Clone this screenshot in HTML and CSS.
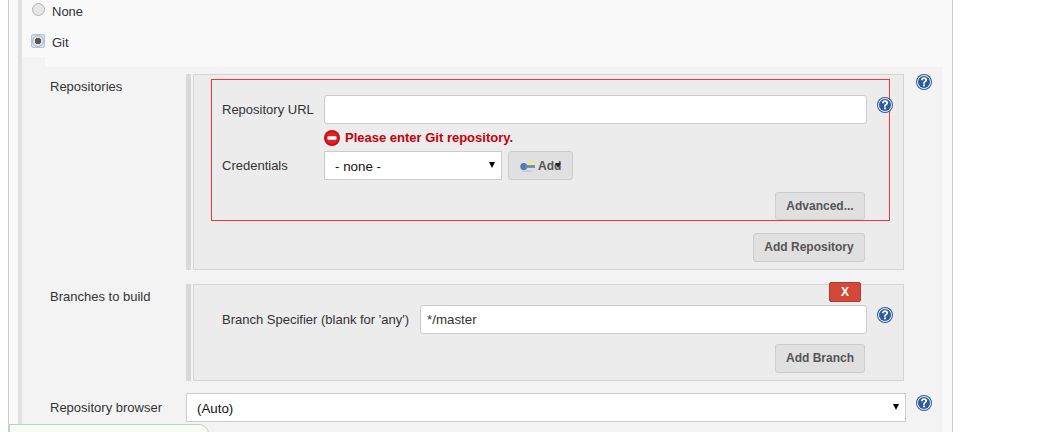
FILE: index.html
```html
<!DOCTYPE html>
<html lang="en">
<head>
<meta charset="utf-8">
<title>Source Code Management</title>
<link rel="stylesheet" href="styles.css">
</head>
<body>
<svg class="defs" width="0" height="0" aria-hidden="true">
  <symbol id="help" viewBox="0 0 16 16">
    <circle cx="8" cy="8" r="8" fill="#2f5a9e"/>
    <circle cx="8" cy="8" r="7" fill="#e8eef8"/>
    <circle cx="8" cy="8" r="6" fill="#2f5a9e"/>
    <path d="M5 6.200C5 4.300 6.300 3.200 8.100 3.200s3 1 3 2.600c0 1.300-.7 1.900-1.500 2.500-.6.400-.8.700-.8 1.400H7.100c0-1.200.3-1.800 1.100-2.400.6-.5.900-.7.900-1.300 0-.6-.4-1-1.100-1-.8 0-1.200.5-1.200 1.200Z" fill="#fff"/>
    <rect x="7.100" y="10.400" width="1.800" height="1.900" fill="#fff"/>
  </symbol>
</svg>
<div class="frame">
  <div class="scm">
    <div class="choice"><span class="radio"></span><span>None</span></div>
    <div class="choice choice-git"><span class="focus"><span class="radio radio-on"></span></span><span>Git</span></div>
    <div class="tab"></div>
    <section class="git">
      <div class="row row-repo">
        <div class="row-label">Repositories</div>
        <div class="block">
          <div class="box">
            <div class="invalid">
              <div class="field field-url">
                <label class="field-label">Repository URL</label>
                <input class="text" type="text">
                <svg class="help help-in"><use href="#help"/></svg>
              </div>
              <div class="error">
                <svg class="stop" viewBox="0 0 16 16"><circle cx="8" cy="8" r="8" fill="#c8101a"/><circle cx="8" cy="8" r="6" fill="#e01f26"/><rect x="3.500" y="6.300" width="9" height="3.400" rx=".6" fill="#fff"/></svg>
                <span class="error-text">Please enter Git repository.</span>
              </div>
              <div class="field field-cred">
                <label class="field-label">Credentials</label>
                <div class="cred-controls">
                  <div class="select select-cred">- none -</div>
                  <div class="btn btn-add">
                    <svg class="key" viewBox="0 0 16 12"><ellipse cx="7" cy="11" rx="6" ry="1" fill="#ccc"/><circle cx="11" cy="2.500" r="2.200" fill="#f5ee5a"/><circle cx="3.800" cy="6.500" r="3.500" fill="#4f7ab2"/><rect x="5" y="5.200" width="10" height="2.600" fill="#5f88bd"/></svg>
                    <span>Add</span><span class="caret"></span>
                  </div>
                </div>
              </div>
              <div class="actions actions-adv"><div class="btn">Advanced...</div></div>
            </div>
            <div class="actions actions-repo"><div class="btn">Add Repository</div></div>
          </div>
        </div>
        <svg class="help"><use href="#help"/></svg>
      </div>
      <div class="row row-branch">
        <div class="row-label">Branches to build</div>
        <div class="block">
          <div class="box box-branch">
            <div class="btn-x">X</div>
            <div class="field field-branch">
              <label class="field-label">Branch Specifier (blank for 'any')</label>
              <input class="text" type="text" value="*/master">
              <svg class="help help-in"><use href="#help"/></svg>
            </div>
            <div class="actions actions-branch"><div class="btn">Add Branch</div></div>
          </div>
        </div>
      </div>
      <div class="row row-browser">
        <div class="row-label">Repository browser</div>
        <div class="select select-browser">(Auto)</div>
        <svg class="help"><use href="#help"/></svg>
      </div>
    </section>
  </div>
</div>
<div class="badge"></div>
</body>
</html>
```

FILE: styles.css
```css
html, body { margin: 0; padding: 0; background: #fff; }
body {
  height: 432px;
  overflow: hidden;
  position: relative;
  font: 13px "Liberation Sans", Arial, sans-serif;
  color: #333;
}
.defs { position: absolute; }
.frame {
  width: 943px;
  height: 432px;
  margin-left: 8px;
  background: #f9f9f9;
  border-left: 1px solid #ccc;
  border-right: 1px solid #ccc;
  overflow: hidden;
}
.scm {
  margin: 0 10px 0 9px;
  border-left: 4px solid #e0e0e0;
  height: 432px;
}
.choice {
  display: flex;
  align-items: center;
  gap: 7px;
  height: 22px;
  padding-left: 10px;
  color: #333;
}
.choice-git { margin-top: 9px; padding-left: 9px; }
.radio {
  box-sizing: border-box;
  display: block;
  width: 13px;
  height: 13px;
  margin-top: -3px;
  border: 1px solid #b4b4b4;
  border-radius: 50%;
  background: #e6e6e6;
}
.radio-on {
  width: 12px;
  height: 12px;
  margin-top: 0;
  background: radial-gradient(circle, #555 0 3px, #e2e2e2 3.500px);
}
.focus {
  display: block;
  margin-top: -3px;
  border: 1px solid #a5c6fb;
  background: #cfe0fb;
  border-radius: 2px;
}
.tab { width: 23px; height: 10px; margin-top: 4px; background: #f3f3f3; }
.git {
  padding-top: 7px;
  height: 358px;
  background: #f3f3f3;
}
.row {
  display: grid;
  grid-template-columns: 136px 720px 16px;
  padding-left: 28px;
}
.row > .help { margin-left: 10px; }
.row-label { padding-top: 5px; line-height: 15px; }
.row-branch { margin-top: 14px; }
.row-browser { margin-top: 12px; }
.row-browser .row-label { padding-top: 7px; }
.row-browser > .help { margin-top: 2px; }
.block {
  border-left: 5px solid #d8d8d8;
  padding-left: 2px;
  margin-right: 2px;
}
.box {
  box-sizing: border-box;
  position: relative;
  height: 196px;
  padding: 4px 13px 0 17px;
  background: #ececec;
  border: 1px solid #d5d5d5;
}
.box-branch { height: 97px; padding: 20px 13px 0 28px; }
.invalid {
  box-sizing: border-box;
  height: 142px;
  padding: 15px 0 0 10px;
  border: 1px solid #f33;
}
.field { display: grid; align-items: center; }
.field-url { grid-template-columns: 102px 543px 26px; }
.field-cred { grid-template-columns: 102px 1fr; }
.field-branch { grid-template-columns: 198px 447px 26px; }
.field-label { line-height: 15px; }
.text {
  box-sizing: border-box;
  width: 100%;
  height: 29px;
  padding: 0 6px;
  border: 1px solid #ccc;
  border-radius: 3px;
  background: #fff;
  font: 13.33px "Liberation Sans", Arial, sans-serif;
  color: #333;
  outline: none;
}
.help { display: block; width: 16px; height: 16px; }
.help-in { margin-left: 10px; margin-top: -9px; }
.error {
  display: flex;
  align-items: center;
  gap: 5px;
  height: 16px;
  margin: 6px 0 5px 102px;
  color: #c4000a;
  font-weight: bold;
}
.error-text { padding-bottom: 2px; }
.stop { display: block; width: 16px; height: 16px; }
.cred-controls { display: flex; gap: 6px; }
.select {
  box-sizing: border-box;
  position: relative;
  display: flex;
  align-items: center;
  height: 29px;
  padding: 1px 10px 0;
  border: 1px solid #ccc;
  background: #fff;
  color: #111;
  font-size: 13.33px;
}
.select::after {
  content: "";
  position: absolute;
  top: 10px;
  right: 6px;
  border-style: solid;
  border-width: 6px 3px 0;
  border-color: #000 transparent transparent;
}
.select-cred { width: 178px; }
.select-browser { width: 720px; }
.btn {
  box-sizing: border-box;
  display: flex;
  align-items: center;
  height: 29px;
  padding: 0 10px;
  background: #e0e0e0;
  border: 1px solid #ccc;
  border-radius: 3px;
  color: #555;
  font-size: 12px;
  font-weight: bold;
  white-space: nowrap;
}
.btn-add {
  position: relative;
  width: 65px;
  padding: 0 0 0 11px;
  gap: 2px;
}
.key { display: block; width: 16px; height: 12px; }
.caret {
  position: absolute;
  left: 46px;
  top: 11px;
  border-style: solid;
  border-width: 5px 3px 0;
  border-color: #222 transparent transparent;
}
.actions { display: flex; justify-content: flex-end; }
.actions .btn { justify-content: center; }
.actions-adv { margin: 12px 24px 0 0; }
.actions-adv .btn { width: 90px; height: 28px; }
.actions-repo { margin: 12px 25px 0 0; }
.actions-repo .btn { width: 112px; padding-bottom: 2px; }
.actions-branch { margin: 10px 25px 0 0; }
.actions-branch .btn { width: 90px; padding-bottom: 2px; }
.btn-x {
  position: absolute;
  top: -3px;
  left: 635px;
  width: 32px;
  height: 20px;
  background: #d24939;
  border-radius: 2px;
  border: 1px solid #b8392b;
  box-sizing: border-box;
  color: #fff;
  font-weight: bold;
  font-size: 12px;
  line-height: 18px;
  text-align: center;
}
.badge {
  position: absolute;
  left: 9px;
  top: 424px;
  box-sizing: border-box;
  width: 200px;
  height: 20px;
  background: #f6fbf6;
  border: 1px solid #b5d6c0;
  border-radius: 0 10px 0 0;
}
```
